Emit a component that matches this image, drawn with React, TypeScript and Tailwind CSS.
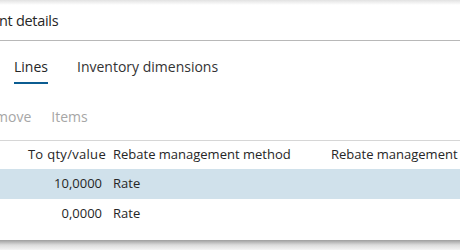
import React from "react";

export default function App() {
  const font = { fontFamily: '"Open Sans", "Liberation Sans", sans-serif' };
  return (
    <div className="w-[460px] h-[250px] overflow-hidden bg-white text-[#262626]" style={font}>
      <div className="h-[5px] bg-gradient-to-b from-[#e2e2e2] to-white" />
      <div className="h-[35px] flex items-center text-[14.5px] tracking-[-0.3px] leading-none pb-[2px]">
        <span className="-ml-[1px]">nt details</span>
      </div>
      <div className="h-px bg-[#b8b8b8]" />
      <div className="h-[43px] flex items-end gap-[29px] pl-[14px] text-[14px]">
        <div className="flex flex-col items-center">
          <span className="leading-none">Lines</span>
          <div className="mt-[8px] h-[2px] w-[34px] bg-[#0b5c91]" />
        </div>
        <span className="leading-none mb-[10px] text-[#333]">Inventory dimensions</span>
      </div>
      <div className="h-[56px] flex items-center gap-[20px] text-[14px] text-[#a6a6a6] pt-[9px]">
        <span className="-ml-[5px]">move</span>
        <span>Items</span>
      </div>
      <div className="h-px bg-[#d6d6d6]" />
      <div className="h-[28px] flex items-center text-[13px] whitespace-nowrap">
        <div className="w-[106px] text-right tracking-[0.3px]">To qty/value</div>
        <div className="ml-[7px] w-[218px]">Rebate management method</div>
        <div>Rebate management</div>
      </div>
      <div className="h-[30px] flex items-center text-[13px] bg-[#d0e1eb] whitespace-nowrap">
        <div className="w-[102px] text-right">10,0000</div>
        <div className="ml-[11px]">Rate</div>
      </div>
      <div className="h-[30px] flex items-center text-[13px] whitespace-nowrap">
        <div className="w-[102px] text-right">0,0000</div>
        <div className="ml-[11px]">Rate</div>
      </div>
      <div className="h-[11px]" />
      <div className="h-[10px] bg-gradient-to-b from-[#9e9e9e] via-[#dcdcdc] to-[#f4f4f4]" />
    </div>
  );
}
